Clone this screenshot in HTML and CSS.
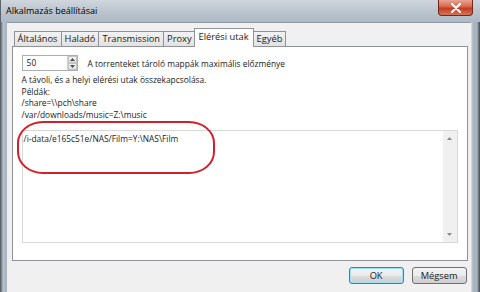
FILE: index.html
```html
<html>
   <head>
      <meta charset="utf-8">
      <link rel="stylesheet" href="styles.css">
   </head>
   <body>
      <div class="window">
         <div class="titleBar">
            <span class="titleText">Alkalmazás beállításai</span>
            <div class="closeButton">
               <svg width="12" height="10" viewBox="0 0 12 10"><path d="M2 1 L10 9 M10 1 L2 9" stroke="#fff" stroke-width="2.2" stroke-linecap="round"/></svg>
            </div>
         </div>
         <div class="frameBody">
            <div class="frameLeft"></div>
            <div class="client">
               <div class="tabStrip">
                  <div class="tab">Általános</div>
                  <div class="tab">Haladó</div>
                  <div class="tab">Transmission</div>
                  <div class="tab">Proxy</div>
                  <div class="tab active">Elérési utak</div>
                  <div class="tab">Egyéb</div>
               </div>
               <div class="panel">
                  <div class="spinRow">
                     <div class="spinBox">
                        <span class="spinValue">50</span>
                        <div class="spinButtons">
                           <div class="spinBtn"><svg width="5" height="3" viewBox="0 0 5 3"><path d="M0 3 L2.5 0 L5 3Z" fill="#4d4d4d"/></svg></div>
                           <div class="spinBtn"><svg width="5" height="3" viewBox="0 0 5 3"><path d="M0 0 L2.5 3 L5 0Z" fill="#4d4d4d"/></svg></div>
                        </div>
                     </div>
                     <span class="spinLabel">A torrenteket tároló mappák maximális előzménye</span>
                  </div>
                  <div class="info">
                     <div>A távoli, és a helyi elérési utak összekapcsolása.</div>
                     <div>Példák:</div>
                     <div>/share=\\pch\share</div>
                     <div>/var/downloads/music=Z:\music</div>
                  </div>
                  <div class="mapBox">
                     <div class="mapText">/i-data/e165c51e/NAS/Film=Y:\NAS\Film</div>
                     <div class="scrollBar">
                        <svg width="5" height="3" viewBox="0 0 5 3"><path d="M0 3 L2.5 0 L5 3Z" fill="#8a8a8a"/></svg>
                        <svg width="5" height="3" viewBox="0 0 5 3"><path d="M0 0 L2.5 3 L5 0Z" fill="#8a8a8a"/></svg>
                     </div>
                     <div class="redMark"></div>
                  </div>
               </div>
               <div class="buttonRow">
                  <div class="button default">OK</div>
                  <div class="button">Mégsem</div>
               </div>
            </div>
            <div class="frameRight"></div>
         </div>
      </div>
   </body>
</html>
```
FILE: styles.css
```css
body {
margin: 0;
font-family: "Open Sans", sans-serif;
font-size: 8.4px;
color: #1a1a1a;
}
.window {
width: 480px;
height: 292px;
display: flex;
flex-direction: column;
background: linear-gradient(to bottom, #c3ccd6, #aab6c2);
overflow: hidden;
}
.titleBar {
height: 22px;
display: flex;
align-items: flex-start;
justify-content: space-between;
background: linear-gradient(to bottom, #d0d6dd 0%, #bcc5cf 50%, #aeb9c5 100%);
border-left: 1px solid #5a646e;
}
.titleText {
padding-left: 5px;
padding-top: 4px;
font-size: 9px;
color: #000;
}
.closeButton {
width: 35px;
height: 16px;
margin-right: 7px;
border: 1px solid #6b2a22;
border-top: none;
border-radius: 0 0 4px 4px;
background: linear-gradient(to bottom, #e8a593 0%, #d7644a 45%, #c13d20 55%, #d8745a 100%);
display: flex;
align-items: center;
justify-content: center;
box-sizing: border-box;
}
.frameBody {
flex: 1;
display: flex;
}
.frameLeft {
width: 7px;
background: linear-gradient(to right, #4a5058 0px, #8c96a0 2px, #b9c3cd 3px, #aab4be 6px);
}
.frameRight {
width: 10px;
background: linear-gradient(to right, #dfe3e8 0px, #aab4be 2px, #aab4be 6px, #5a6470 8px, #2b3038 10px);
}
.client {
flex: 1;
background: #f0f0f0;
padding: 5px 3px 0 5px;
display: flex;
flex-direction: column;
border-top: 1px solid #8e99a5;
}
.tabStrip {
display: flex;
align-items: flex-end;
height: 18px;
padding-left: 2px;
}
.tab {
height: 14px;
padding: 0 3px;
border: 1px solid #8f9399;
border-bottom: none;
margin-right: -1px;
background: linear-gradient(to bottom, #f2f2f2, #e2e2e2);
line-height: 14px;
font-size: 9.3px;
}
.tab.active {
height: 18px;
background: #fff;
position: relative;
z-index: 1;
margin-bottom: -1px;
padding: 0 4px;
line-height: 15px;
margin-left: -1px;
}
.panel {
height: 215px;
background: #fff;
border: 1px solid #8f9399;
box-sizing: border-box;
padding: 8px 9px 0 9px;
}
.spinRow {
display: flex;
align-items: center;
gap: 10px;
}
.spinBox {
width: 56px;
height: 16px;
border: 1px solid #abadb3;
box-sizing: border-box;
display: flex;
justify-content: space-between;
}
.spinValue {
padding-left: 4px;
line-height: 14px;
}
.spinButtons {
width: 9px;
display: flex;
flex-direction: column;
border-left: 1px solid #d0d0d0;
}
.spinBtn {
flex: 1;
display: flex;
align-items: center;
justify-content: center;
background: linear-gradient(to bottom, #f4f4f4, #e0e0e0);
border: 1px solid #c4c4c4;
}
.info {
padding-top: 3px;
line-height: 11.5px;
}
.mapBox {
margin-top: 10px;
height: 113px;
width: 436px;
border: 1px solid #d8d8d8;
box-sizing: border-box;
display: flex;
justify-content: space-between;
position: relative;
}
.mapText {
padding: 2px 1px;
}
.scrollBar {
width: 14px;
background: #f0f0f0;
display: flex;
flex-direction: column;
justify-content: space-between;
align-items: center;
padding: 6px 0;
}
.redMark {
position: absolute;
left: -6px;
top: -10px;
width: 198px;
height: 53px;
border: 2.5px solid #d21f2b;
border-radius: 26px / 22px;
box-sizing: border-box;
}
.buttonRow {
display: flex;
justify-content: flex-end;
gap: 8px;
padding-top: 6px;
padding-right: 1px;
}
.button {
width: 55px;
height: 17px;
box-sizing: border-box;
border: 1px solid #707070;
border-radius: 3px;
background: linear-gradient(to bottom, #f2f2f2 0%, #ebebeb 50%, #dddddd 51%, #cfcfcf 100%);
text-align: center;
line-height: 15px;
font-size: 9.3px;
}
.button.default {
border-color: #3c7fb1;
box-shadow: inset 0 0 0 1px #9fe1f7;
}
```
